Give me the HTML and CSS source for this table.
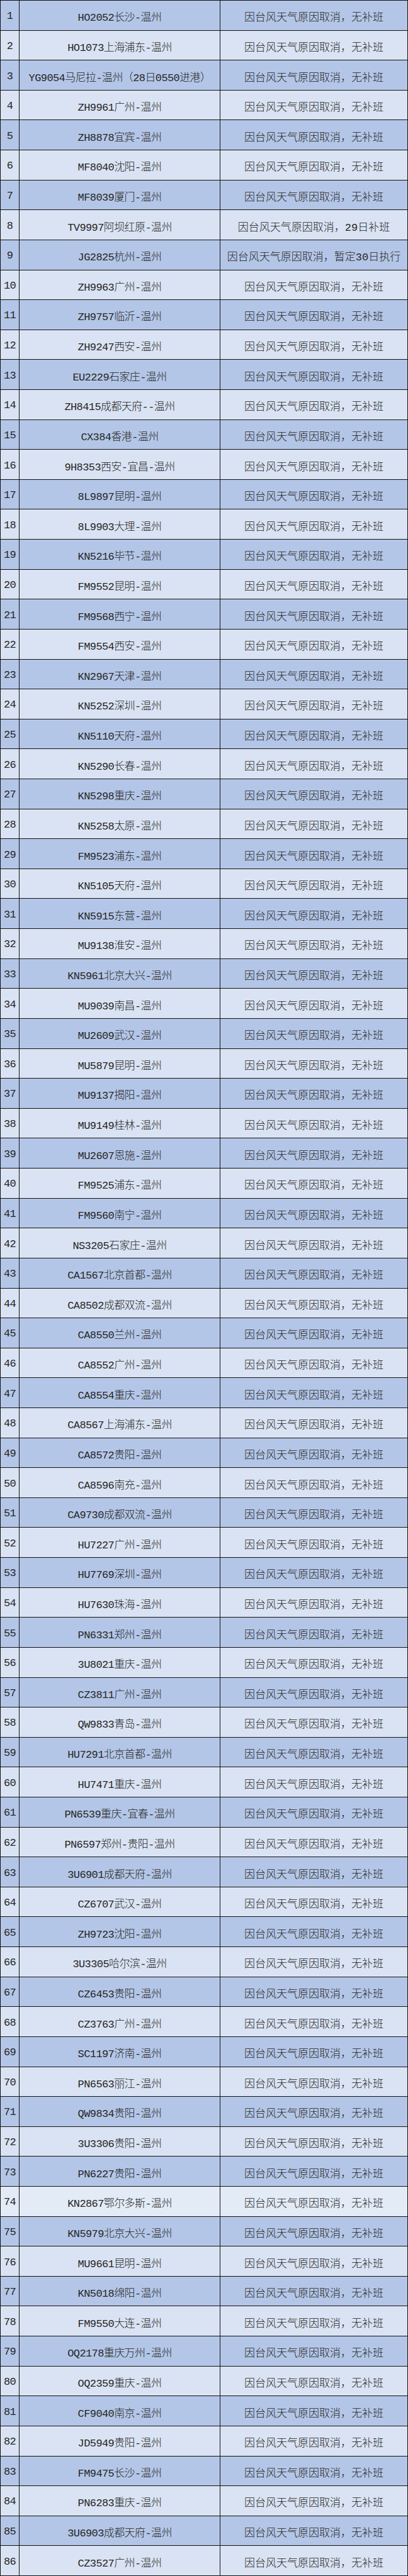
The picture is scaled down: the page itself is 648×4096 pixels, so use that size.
FILE: index.html
```html
<!DOCTYPE html>
<html lang="zh">
<head>
<meta charset="utf-8">
<title>航班取消列表</title>
<link rel="stylesheet" href="styles.css">
</head>
<body>
<div class="sheet">
<div class="row"><div class="num">1</div><div class="flight">HO2052长沙-温州</div><div class="note">因台风天气原因取消，无补班</div></div>
<div class="row"><div class="num">2</div><div class="flight">HO1073上海浦东-温州</div><div class="note">因台风天气原因取消，无补班</div></div>
<div class="row"><div class="num">3</div><div class="flight">YG9054马尼拉-温州（28日0550进港）</div><div class="note">因台风天气原因取消，无补班</div></div>
<div class="row"><div class="num">4</div><div class="flight">ZH9961广州-温州</div><div class="note">因台风天气原因取消，无补班</div></div>
<div class="row"><div class="num">5</div><div class="flight">ZH8878宜宾-温州</div><div class="note">因台风天气原因取消，无补班</div></div>
<div class="row"><div class="num">6</div><div class="flight">MF8040沈阳-温州</div><div class="note">因台风天气原因取消，无补班</div></div>
<div class="row"><div class="num">7</div><div class="flight">MF8039厦门-温州</div><div class="note">因台风天气原因取消，无补班</div></div>
<div class="row"><div class="num">8</div><div class="flight">TV9997阿坝红原-温州</div><div class="note">因台风天气原因取消，29日补班</div></div>
<div class="row"><div class="num">9</div><div class="flight">JG2825杭州-温州</div><div class="note">因台风天气原因取消，暂定30日执行</div></div>
<div class="row"><div class="num">10</div><div class="flight">ZH9963广州-温州</div><div class="note">因台风天气原因取消，无补班</div></div>
<div class="row"><div class="num">11</div><div class="flight">ZH9757临沂-温州</div><div class="note">因台风天气原因取消，无补班</div></div>
<div class="row"><div class="num">12</div><div class="flight">ZH9247西安-温州</div><div class="note">因台风天气原因取消，无补班</div></div>
<div class="row"><div class="num">13</div><div class="flight">EU2229石家庄-温州</div><div class="note">因台风天气原因取消，无补班</div></div>
<div class="row"><div class="num">14</div><div class="flight">ZH8415成都天府--温州</div><div class="note">因台风天气原因取消，无补班</div></div>
<div class="row"><div class="num">15</div><div class="flight">CX384香港-温州</div><div class="note">因台风天气原因取消，无补班</div></div>
<div class="row"><div class="num">16</div><div class="flight">9H8353西安-宜昌-温州</div><div class="note">因台风天气原因取消，无补班</div></div>
<div class="row"><div class="num">17</div><div class="flight">8L9897昆明-温州</div><div class="note">因台风天气原因取消，无补班</div></div>
<div class="row"><div class="num">18</div><div class="flight">8L9903大理-温州</div><div class="note">因台风天气原因取消，无补班</div></div>
<div class="row"><div class="num">19</div><div class="flight">KN5216毕节-温州</div><div class="note">因台风天气原因取消，无补班</div></div>
<div class="row"><div class="num">20</div><div class="flight">FM9552昆明-温州</div><div class="note">因台风天气原因取消，无补班</div></div>
<div class="row"><div class="num">21</div><div class="flight">FM9568西宁-温州</div><div class="note">因台风天气原因取消，无补班</div></div>
<div class="row"><div class="num">22</div><div class="flight">FM9554西安-温州</div><div class="note">因台风天气原因取消，无补班</div></div>
<div class="row"><div class="num">23</div><div class="flight">KN2967天津-温州</div><div class="note">因台风天气原因取消，无补班</div></div>
<div class="row"><div class="num">24</div><div class="flight">KN5252深圳-温州</div><div class="note">因台风天气原因取消，无补班</div></div>
<div class="row"><div class="num">25</div><div class="flight">KN5110天府-温州</div><div class="note">因台风天气原因取消，无补班</div></div>
<div class="row"><div class="num">26</div><div class="flight">KN5290长春-温州</div><div class="note">因台风天气原因取消，无补班</div></div>
<div class="row"><div class="num">27</div><div class="flight">KN5298重庆-温州</div><div class="note">因台风天气原因取消，无补班</div></div>
<div class="row"><div class="num">28</div><div class="flight">KN5258太原-温州</div><div class="note">因台风天气原因取消，无补班</div></div>
<div class="row"><div class="num">29</div><div class="flight">FM9523浦东-温州</div><div class="note">因台风天气原因取消，无补班</div></div>
<div class="row"><div class="num">30</div><div class="flight">KN5105天府-温州</div><div class="note">因台风天气原因取消，无补班</div></div>
<div class="row"><div class="num">31</div><div class="flight">KN5915东营-温州</div><div class="note">因台风天气原因取消，无补班</div></div>
<div class="row"><div class="num">32</div><div class="flight">MU9138淮安-温州</div><div class="note">因台风天气原因取消，无补班</div></div>
<div class="row"><div class="num">33</div><div class="flight">KN5961北京大兴-温州</div><div class="note">因台风天气原因取消，无补班</div></div>
<div class="row"><div class="num">34</div><div class="flight">MU9039南昌-温州</div><div class="note">因台风天气原因取消，无补班</div></div>
<div class="row"><div class="num">35</div><div class="flight">MU2609武汉-温州</div><div class="note">因台风天气原因取消，无补班</div></div>
<div class="row"><div class="num">36</div><div class="flight">MU5879昆明-温州</div><div class="note">因台风天气原因取消，无补班</div></div>
<div class="row"><div class="num">37</div><div class="flight">MU9137揭阳-温州</div><div class="note">因台风天气原因取消，无补班</div></div>
<div class="row"><div class="num">38</div><div class="flight">MU9149桂林-温州</div><div class="note">因台风天气原因取消，无补班</div></div>
<div class="row"><div class="num">39</div><div class="flight">MU2607恩施-温州</div><div class="note">因台风天气原因取消，无补班</div></div>
<div class="row"><div class="num">40</div><div class="flight">FM9525浦东-温州</div><div class="note">因台风天气原因取消，无补班</div></div>
<div class="row"><div class="num">41</div><div class="flight">FM9560南宁-温州</div><div class="note">因台风天气原因取消，无补班</div></div>
<div class="row"><div class="num">42</div><div class="flight">NS3205石家庄-温州</div><div class="note">因台风天气原因取消，无补班</div></div>
<div class="row"><div class="num">43</div><div class="flight">CA1567北京首都-温州</div><div class="note">因台风天气原因取消，无补班</div></div>
<div class="row"><div class="num">44</div><div class="flight">CA8502成都双流-温州</div><div class="note">因台风天气原因取消，无补班</div></div>
<div class="row"><div class="num">45</div><div class="flight">CA8550兰州-温州</div><div class="note">因台风天气原因取消，无补班</div></div>
<div class="row"><div class="num">46</div><div class="flight">CA8552广州-温州</div><div class="note">因台风天气原因取消，无补班</div></div>
<div class="row"><div class="num">47</div><div class="flight">CA8554重庆-温州</div><div class="note">因台风天气原因取消，无补班</div></div>
<div class="row"><div class="num">48</div><div class="flight">CA8567上海浦东-温州</div><div class="note">因台风天气原因取消，无补班</div></div>
<div class="row"><div class="num">49</div><div class="flight">CA8572贵阳-温州</div><div class="note">因台风天气原因取消，无补班</div></div>
<div class="row"><div class="num">50</div><div class="flight">CA8596南充-温州</div><div class="note">因台风天气原因取消，无补班</div></div>
<div class="row"><div class="num">51</div><div class="flight">CA9730成都双流-温州</div><div class="note">因台风天气原因取消，无补班</div></div>
<div class="row"><div class="num">52</div><div class="flight">HU7227广州-温州</div><div class="note">因台风天气原因取消，无补班</div></div>
<div class="row"><div class="num">53</div><div class="flight">HU7769深圳-温州</div><div class="note">因台风天气原因取消，无补班</div></div>
<div class="row"><div class="num">54</div><div class="flight">HU7630珠海-温州</div><div class="note">因台风天气原因取消，无补班</div></div>
<div class="row"><div class="num">55</div><div class="flight">PN6331郑州-温州</div><div class="note">因台风天气原因取消，无补班</div></div>
<div class="row"><div class="num">56</div><div class="flight">3U8021重庆-温州</div><div class="note">因台风天气原因取消，无补班</div></div>
<div class="row"><div class="num">57</div><div class="flight">CZ3811广州-温州</div><div class="note">因台风天气原因取消，无补班</div></div>
<div class="row"><div class="num">58</div><div class="flight">QW9833青岛-温州</div><div class="note">因台风天气原因取消，无补班</div></div>
<div class="row"><div class="num">59</div><div class="flight">HU7291北京首都-温州</div><div class="note">因台风天气原因取消，无补班</div></div>
<div class="row"><div class="num">60</div><div class="flight">HU7471重庆-温州</div><div class="note">因台风天气原因取消，无补班</div></div>
<div class="row"><div class="num">61</div><div class="flight">PN6539重庆-宜春-温州</div><div class="note">因台风天气原因取消，无补班</div></div>
<div class="row"><div class="num">62</div><div class="flight">PN6597郑州-贵阳-温州</div><div class="note">因台风天气原因取消，无补班</div></div>
<div class="row"><div class="num">63</div><div class="flight">3U6901成都天府-温州</div><div class="note">因台风天气原因取消，无补班</div></div>
<div class="row"><div class="num">64</div><div class="flight">CZ6707武汉-温州</div><div class="note">因台风天气原因取消，无补班</div></div>
<div class="row"><div class="num">65</div><div class="flight">ZH9723沈阳-温州</div><div class="note">因台风天气原因取消，无补班</div></div>
<div class="row"><div class="num">66</div><div class="flight">3U3305哈尔滨-温州</div><div class="note">因台风天气原因取消，无补班</div></div>
<div class="row"><div class="num">67</div><div class="flight">CZ6453贵阳-温州</div><div class="note">因台风天气原因取消，无补班</div></div>
<div class="row"><div class="num">68</div><div class="flight">CZ3763广州-温州</div><div class="note">因台风天气原因取消，无补班</div></div>
<div class="row"><div class="num">69</div><div class="flight">SC1197济南-温州</div><div class="note">因台风天气原因取消，无补班</div></div>
<div class="row"><div class="num">70</div><div class="flight">PN6563丽江-温州</div><div class="note">因台风天气原因取消，无补班</div></div>
<div class="row"><div class="num">71</div><div class="flight">QW9834贵阳-温州</div><div class="note">因台风天气原因取消，无补班</div></div>
<div class="row"><div class="num">72</div><div class="flight">3U3306贵阳-温州</div><div class="note">因台风天气原因取消，无补班</div></div>
<div class="row"><div class="num">73</div><div class="flight">PN6227贵阳-温州</div><div class="note">因台风天气原因取消，无补班</div></div>
<div class="row pale"><div class="num">74</div><div class="flight">KN2867鄂尔多斯-温州</div><div class="note">因台风天气原因取消，无补班</div></div>
<div class="row"><div class="num">75</div><div class="flight">KN5979北京大兴-温州</div><div class="note">因台风天气原因取消，无补班</div></div>
<div class="row"><div class="num">76</div><div class="flight">MU9661昆明-温州</div><div class="note">因台风天气原因取消，无补班</div></div>
<div class="row"><div class="num">77</div><div class="flight">KN5018绵阳-温州</div><div class="note">因台风天气原因取消，无补班</div></div>
<div class="row"><div class="num">78</div><div class="flight">FM9550大连-温州</div><div class="note">因台风天气原因取消，无补班</div></div>
<div class="row"><div class="num">79</div><div class="flight">OQ2178重庆万州-温州</div><div class="note">因台风天气原因取消，无补班</div></div>
<div class="row"><div class="num">80</div><div class="flight">OQ2359重庆-温州</div><div class="note">因台风天气原因取消，无补班</div></div>
<div class="row"><div class="num">81</div><div class="flight">CF9040南京-温州</div><div class="note">因台风天气原因取消，无补班</div></div>
<div class="row"><div class="num">82</div><div class="flight">JD5949贵阳-温州</div><div class="note">因台风天气原因取消，无补班</div></div>
<div class="row"><div class="num">83</div><div class="flight">FM9475长沙-温州</div><div class="note">因台风天气原因取消，无补班</div></div>
<div class="row"><div class="num">84</div><div class="flight">PN6283重庆-温州</div><div class="note">因台风天气原因取消，无补班</div></div>
<div class="row"><div class="num">85</div><div class="flight">3U6903成都天府-温州</div><div class="note">因台风天气原因取消，无补班</div></div>
<div class="row"><div class="num">86</div><div class="flight">CZ3527广州-温州</div><div class="note">因台风天气原因取消，无补班</div></div>
</div>
</body>
</html>
```

FILE: styles.css
```css
* {
  box-sizing: border-box;
}

html, body {
  margin: 0;
  padding: 0;
  background: #ffffff;
}

.sheet {
  width: 648px;
  height: 4096px;
  display: grid;
  grid-template-rows: repeat(86, 1fr);
  border-top: 1px solid #111;
  border-left: 1px solid #111;
  font-family: "Liberation Mono", "Noto Sans CJK SC", monospace;
  font-size: 17px;
  font-weight: 300;
  color: #262626;
}

.row {
  display: grid;
  grid-template-columns: 30px 319px 1fr;
  border-bottom: 1px solid #111;
  background: #dae3f3;
  min-height: 0;
}

.row:nth-child(odd) {
  background: #b4c6e7;
}

.row.pale {
  background: #e3ebf7;
}

.num,
.flight,
.note {
  display: flex;
  align-items: center;
  justify-content: center;
  border-right: 1px solid #111;
  padding-top: 3px;
  white-space: nowrap;
  overflow: hidden;
}

.num {
  letter-spacing: -0.8px;
}

.flight {
  letter-spacing: -0.6px;
}

.note {
  letter-spacing: 0;
}
```
